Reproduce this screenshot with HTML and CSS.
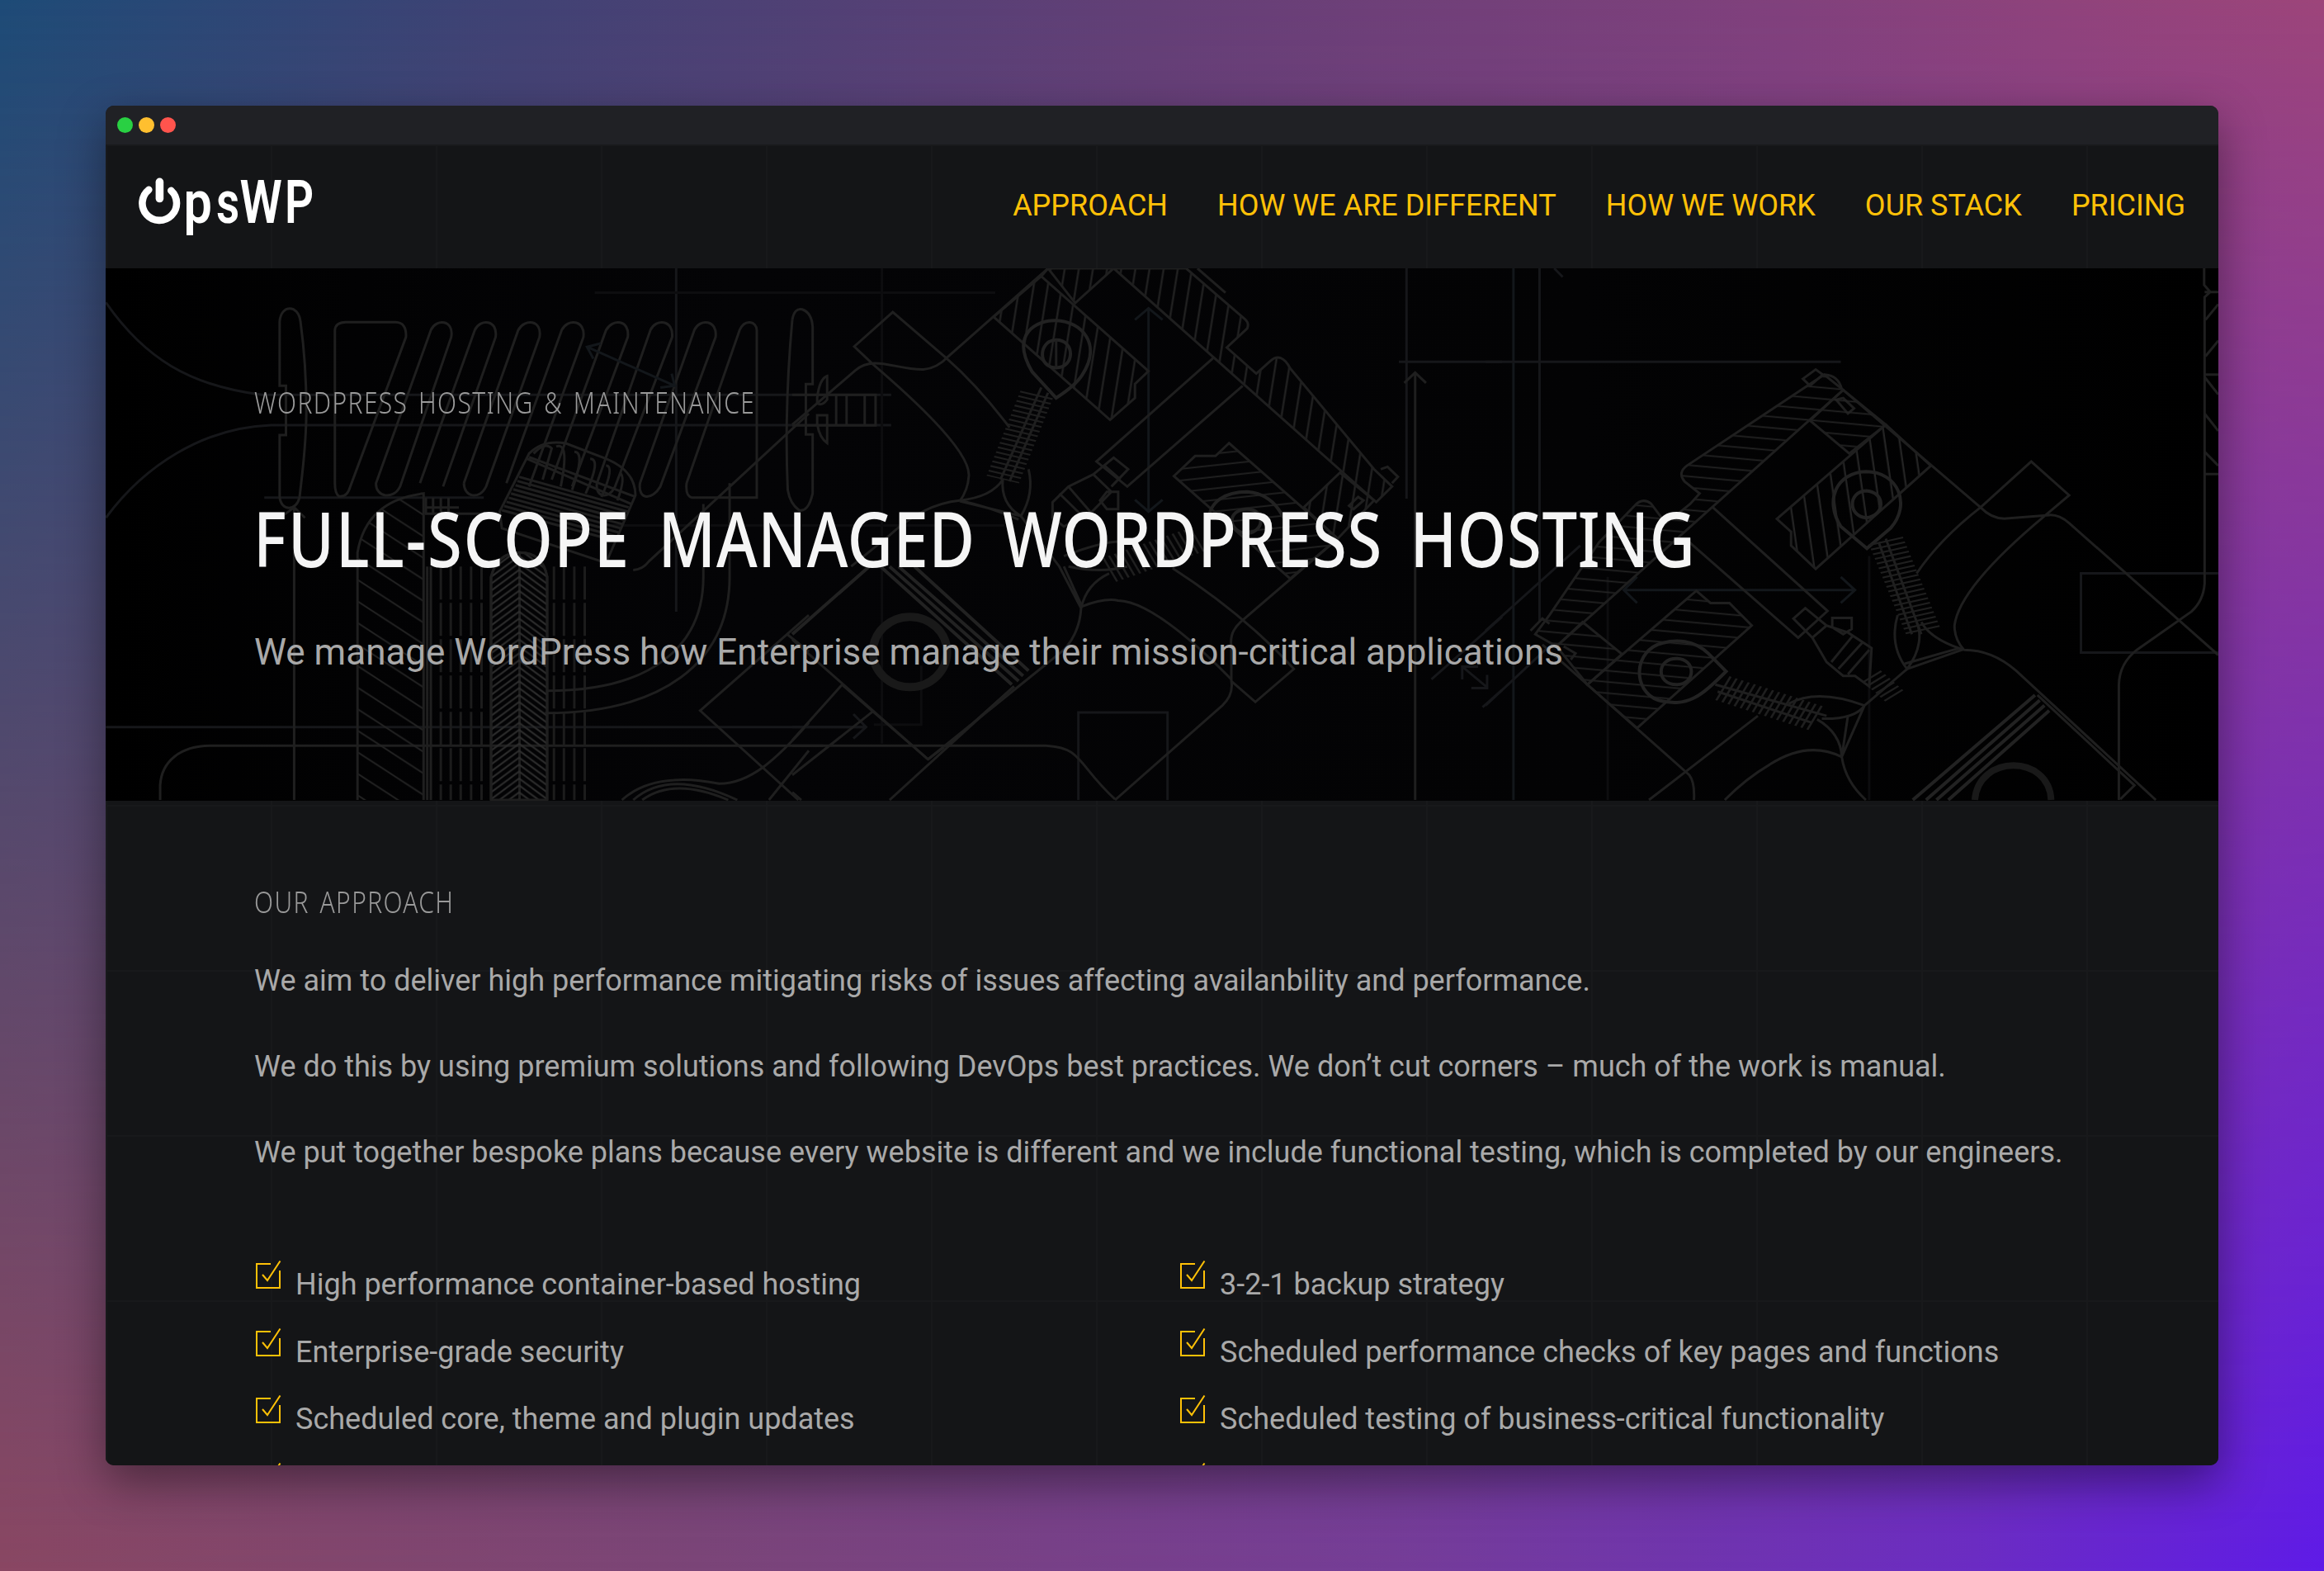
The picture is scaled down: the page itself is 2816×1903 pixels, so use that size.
FILE: index.html
```html
<!DOCTYPE html>
<html lang="en">
<head>
<meta charset="utf-8">
<title>OpsWP</title>
<link rel="stylesheet" href="styles.css">
</head>
<body>
<svg class="defs" width="0" height="0" aria-hidden="true">
  <symbol id="check" viewBox="0 0 32 36">
    <path d="M18 4H1v29h28V12M8 17l6 7L29.500 0.500" fill="none" stroke="#ffc107" stroke-width="2"/>
  </symbol>
</svg>
<div class="window">
  <div class="titlebar"><i class="dot green"></i><i class="dot yellow"></i><i class="dot red"></i></div>
  <div class="page">
    <header class="header">
      <svg class="logo" viewBox="0 0 230 100" role="img" aria-label="OpsWP">
        <g fill="none" stroke="#fff" stroke-linecap="round">
          <path d="M20.300 29.800A20.800 20.800 0 1 0 47.300 30.800" stroke-width="8.600"/>
          <path d="M33.400 20.300V40.500" stroke-width="9.600"/>
        </g>
        <g class="logo-text">
          <text transform="translate(62.500 70) scale(.84 1)">p</text>
          <text transform="translate(102 70) scale(.75 1)">s</text>
          <text transform="translate(130.500 70) scale(.8 1)">W</text>
          <text transform="translate(185 70) scale(.75 1)">P</text>
        </g>
      </svg>
      <nav class="nav"><a>APPROACH</a><a>HOW WE ARE DIFFERENT</a><a>HOW WE WORK</a><a>OUR STACK</a><a>PRICING</a></nav>
    </header>
    <section class="hero">
      <svg class="blueprint" viewBox="128 325 2560 645" aria-hidden="true">
        <defs>
          <pattern id="hLeft" width="146" height="62" patternUnits="userSpaceOnUse" x="571" y="660"><path d="M0-62L146 62M0 0L146 124M0-124L146 0" stroke="#232323" stroke-width="4"/></pattern>
          <pattern id="chev" width="124" height="20" patternUnits="userSpaceOnUse" x="866" y="860"><path d="M0 60L62 0L124 60M0 40L62-20L124 40M0 20L62-40L124 20M0 80L62 20L124 80M0 0L62-60L124 0" fill="none" stroke="#2c2c2c" stroke-width="4.500"/></pattern>
          <pattern id="hUp" width="31" height="40" patternUnits="userSpaceOnUse" patternTransform="rotate(7)"><path d="M10-2V42" stroke="#242424" stroke-width="4"/></pattern>
          <pattern id="hFlat" width="40" height="33" patternUnits="userSpaceOnUse" patternTransform="rotate(-8)"><path d="M-2 10H42" stroke="#232323" stroke-width="4"/></pattern>
          <pattern id="hFlat2" width="40" height="32" patternUnits="userSpaceOnUse" patternTransform="rotate(7)"><path d="M-2 10H42" stroke="#242424" stroke-width="4"/></pattern>
          <pattern id="hUp2" width="31" height="40" patternUnits="userSpaceOnUse" patternTransform="rotate(-6)"><path d="M10-2V42" stroke="#242424" stroke-width="4"/></pattern>
          <linearGradient id="glow"><stop offset="0" stop-color="#000"/><stop offset=".12" stop-color="#020203"/><stop offset=".3" stop-color="#040406"/><stop offset=".7" stop-color="#030304"/><stop offset="1" stop-color="#000"/></linearGradient>
        </defs>
        <rect x="128" y="325" width="2560" height="645" fill="url(#glow)"/>

        <!-- crankshaft, filter and belts -->
        <g class="ink" transform="translate(120 320) scale(.5485 .4209)">
          <path class="soft" d="M15 110C100 270 200 350 360 376H1750M15 730C100 580 230 470 380 463H1750M1275 12V1000M15 1332H1690M365 672H850"/>
          <path class="faint" d="M1095 82H1980M1120 752H2000"/>
          <path d="M135 1542V1500C138 1430 180 1387 245 1386H1600M431 700V1542M431 700L455 730M431 700L405 725"/>
          <path d="M399 350V165C402 115 440 115 445 165C455 260 458 330 458 420C458 520 450 590 443 670C437 712 402 712 399 670V492H413V350Z"/>
          <path d="M521 190Q522 168 545 167H655Q680 168 678 210L555 640Q548 672 530 668Q521 660 521 630Z"/>
          <path d="M612 630L733 190C745 155 785 160 778 210L665 640C650 680 610 670 612 630ZM709 630L830 190C842 155 882 160 876 210L760 640M806 630L926 190C940 155 980 160 973 210L855 640C840 680 806 670 806 630M900 630L1022 190C1035 155 1075 160 1070 210L950 640M1000 620L1120 190C1135 155 1173 160 1168 210L1045 640M1100 630L1218 190C1230 155 1270 160 1266 210L1140 640C1125 680 1095 670 1100 630M1195 630L1315 190C1327 155 1367 160 1362 210L1240 640C1222 680 1190 680 1195 630M1298 630L1415 190C1427 155 1453 165 1453 190V672H1310Q1295 668 1298 630"/>
          <path class="cold" d="M1078 238L1272 350M1108 228L1078 238L1092 272M1265 315L1272 350L1240 355"/>
          <path d="M571 1542V830Q590 680 717 660V1542" fill="url(#hLeft)"/>
          <path d="M725 870V1542M733 870V1542M866 1542V900Q880 830 929 830Q980 830 990 900V1542M929 830V1542" />
          <path d="M866 1542V900Q880 830 929 830Q980 830 990 900V1542Z" fill="url(#chev)"/>
          <path class="dash" d="M755 870V1542M777 870V1542M799 870V1542M822 870V1542M845 870V1542M1005 870V1542M1027 870V1542M1050 870V1542M1073 870V1542"/>
          <path d="M722 672V720M738 672V720M755 672V720M772 672V720M720 700H795M720 718H880"/>
          <path d="M885 712L950 545Q980 505 1030 515L1120 560Q1185 595 1185 665L1120 860L890 760ZM950 555L1182 668M945 560L1175 690"/>
          <path d="M960 545Q985 510 1000 530L980 620M1010 525Q1040 510 1020 640M1050 540Q1075 540 1045 650M1085 560Q1110 560 1075 660M1120 580Q1140 580 1110 670M1150 600Q1165 610 1145 680"/>
          <path d="M928 612L1170 700M924 624L1168 712M920 636L1164 724M915 648L1160 736M910 660L1156 748M905 672L1152 760M900 684L1148 772M895 696L1144 784M890 708L1140 796"/>
          <path d="M1335 690V900C1335 1100 1220 1228 990 1228M1393 630V900C1393 1150 1240 1292 985 1292M1180 880Q1200 880 1215 855L1568 430M1568 1010L1328 1285L1545 1542M1520 1065L1568 1115M1568 1320C1500 1420 1440 1495 1370 1495Q1310 1480 1270 1485Q1200 1490 1155 1542M1180 1542Q1260 1450 1410 1542M1200 1542Q1270 1475 1390 1542M1480 1542L1568 1400"/>
        </g>

        <!-- left cylinder bank -->
        <g class="ink" transform="translate(960 320) scale(.5485 .4209)">
          <path d="M0 160Q5 125 22 130Q43 140 45 180V345H30V490H45V660Q35 715 15 708Q-5 690-10 650Q-18 420 0 160M0 376H184V464H0M97 376V464M120 376V464M160 376V464M55 385Q60 330 77 322V390Q65 410 55 400ZM55 435H77V515Q60 500 55 460Z"/>
          <path class="soft" d="M0 1332H160M135 1295L163 1332L135 1365M632 1542V1290H829V1542M1357 12V675M1340 281H1568"/>
          <path class="faint" d="M198 12V1380M285 1155V1325H180"/>
          <path class="cold" d="M787 130V710M757 160L787 127L818 160M757 678L787 712L818 678"/>
          <path d="M1376 312V1542M1352 342L1376 312L1400 342"/>
          <path d="M0 462L140 305C180 260 230 305 290 303Q320 300 345 265L565 12M180 290L137 237L222 138L340 270Q410 350 480 470M180 290Q395 530 390 610Q388 650 370 682"/>
          <path d="M445 152L550 35L787 308L757 345V385L702 448Z" fill="url(#hUp)"/>
          <path d="M565 12L625 112L710 12Z" fill="url(#hUp)"/>
          <path d="M565 12L550 35M710 12L1290 685L1325 640L1285 590L1100 300Q1080 250 1055 280L1025 315L960 240L1005 185Q1010 170 1000 158L870 12Z" fill="url(#hUp)"/>
          <path d="M895 12L957 82"/>
          <path class="bold" d="M583 385L530 310C480 200 540 160 583 162C640 165 685 230 640 320Q625 350 583 385ZM583 218C545 218 540 298 583 298C625 298 625 218 583 218Z"/>
          <path d="M583 218V298"/>
          <path class="spring" d="M540 375L465 620"/><path d="M550 355L460 620M565 370L480 625"/>
          <path d="M370 680Q440 670 465 620M370 680Q440 700 500 735M370 682L505 725M465 620Q460 690 505 725Q535 660 522 590"/>
          <path d="M130 870L215 780Q290 690 370 680M505 725L590 870L638 990Q635 1060 600 1110L300 1425L0 1080M600 870L640 985Q690 960 720 968Q800 970 970 1195"/>
          <path d="M575 685L610 640L665 605L705 655L660 715L600 755L575 730ZM665 605L710 557L742 590L705 640M610 640L660 715M590 660L645 730M690 580L725 620M680 680L695 655H720V705H695Z"/>
          <path d="M930 270L672 568L740 640L995 350"/>
          <path d="M843 610L890 552H935L965 515L1205 790L1100 905Z" fill="url(#hFlat)"/>
          <path d="M1130 700L1210 600L1285 680L1205 790Z" fill="url(#hUp)"/>
          <path d="M1300 590L1315 583L1338 612L1325 630M1230 695L1250 670L1262 680L1240 705Z"/>
          <path class="bold" d="M920 740C920 680 960 655 1005 655Q1060 660 1085 730M1005 705C960 705 960 770 1005 775C1045 770 1045 705 1005 705"/>
          <path class="spring" d="M700 880L900 790"/>
          <path d="M600 840Q700 790 740 800M610 870Q680 890 740 870M638 990Q650 920 700 890M840 875Q1000 1010 1108 1165L1023 1260L970 1200M1205 790L990 1030Q965 1060 970 1100V1200Q975 1240 950 1270L713 1542M215 1542L490 1215"/>
          <path class="bold" d="M195 870L485 1210M215 870L500 1200M235 870L510 1185M270 870L522 1170M0 1065L170 870"/>
          <ellipse class="ring" cx="260" cy="1116" rx="82" ry="101"/>
          <path d="M0 1386H560C640 1390 630 1440 713 1540M0 1370L110 1210L300 1425M0 1470L180 1285M0 1520L20 1542M340 1390L490 1215M300 1425L335 1390"/>
          <path class="soft" d="M1412 1195L1568 1015M1525 1275L1568 1225M1480 1195V1158H1515M1480 1158L1535 1218M1500 1220H1535V1182"/>
        </g>

        <!-- right cylinder bank -->
        <g class="ink" transform="translate(1800 320) scale(.574 .4209)">
          <path class="cold" d="M59 12V1542M292 938H780M320 900L292 938L320 975M750 900L780 938L750 975"/>
          <path class="soft" d="M114 12V1030M0 281H750M1547 890H1257V1118H1547M145 12L163 37M0 1055L200 810M0 1270L130 1105"/>
          <path class="faint" d="M258 900V1542M810 840V1542"/>
          <path d="M755 362L1045 700Q1070 735 1100 732L1190 722Q1210 720 1232 745L1547 1125M1045 700L1152 568L1232 665L1180 725Q1000 930 990 1040Q990 1080 1010 1110M1045 700Q960 790 910 890"/>
          <path d="M715 318L425 580Q405 600 420 625L452 660L432 690L412 712L380 745L350 690Q332 670 315 695L240 800L135 1010L105 1065L150 1100L755 362Z" fill="url(#hFlat2)"/>
          <path d="M670 330L697 303L712 318L685 350ZM715 318Q745 320 752 360M740 390L755 385L778 415L765 430Z"/>
          <path d="M755 362L845 462L768 545L685 450Z" fill="url(#hFlat2)"/>
          <path d="M845 462L940 580L697 877L645 810V770L615 733Z" fill="url(#hUp2)"/>
          <path class="bold" d="M805 818L750 755C715 680 740 600 803 597C870 597 900 690 855 760ZM803 652C765 655 765 725 803 730C845 725 845 655 803 652"/>
          <path class="spring" d="M845 795L925 1060"/>
          <path d="M845 790L920 1065M830 800L900 1065M870 1010C855 1080 870 1130 890 1165C920 1110 920 1060 910 1030M1010 1110Q940 1080 920 1030M890 1165L1010 1108M885 1150L1000 1105M1010 1110Q1070 1110 1120 1170L1415 1542M1165 1240L1370 1500L1340 1540"/>
          <path d="M480 700L722 998L660 1075L430 800"/>
          <path d="M445 940L475 975H515L562 1040L320 1335L215 1210Z" fill="url(#hFlat2)"/>
          <path d="M205 1030L288 1122L215 1210L150 1100Z" fill="url(#hFlat2)"/>
          <path class="bold" d="M508 1172L470 1120C440 1080 400 1080 375 1090C310 1110 310 1230 365 1255C430 1280 460 1235 508 1172ZM403 1135C360 1135 360 1210 403 1210C445 1210 445 1135 403 1135"/>
          <path class="spring" d="M500 1220L705 1310"/>
          <path d="M485 1210L720 1300M490 1230L690 1320M640 1265Q700 1220 800 1270Q780 1310 710 1308M800 1270L752 1418L765 1300M752 1418Q750 1350 700 1310M752 1418Q680 1370 600 1440Q550 1480 505 1542M345 1542L575 1300M752 1418Q760 1490 803 1542M890 1165L800 1270M95 1055L120 1020L135 1035M165 1100L190 1120L180 1138"/>
          <path d="M120 1095L430 1470Q442 1490 440 1542"/>
          <path d="M650 1020L675 990L720 1040L690 1075ZM690 1075L720 1145L755 1185H780L810 1215L815 1105L765 1060L720 1040M730 1145L775 1070M745 1165L795 1090M765 1180L810 1110M732 1018H773V1050L755 1065L732 1045Z"/>
          <path class="spring small" d="M815 1185L865 1245"/>
          <path class="bold" d="M1160 1240L902 1542M1170 1255L930 1542M1180 1270L952 1542M1190 1285L977 1542"/>
          <path class="ring thin" d="M1033 1542C1040 1410 1190 1410 1194 1542"/>
          <path d="M1547 12M1517 12V60L1530 80L1518 95V920Q1515 970 1490 1000L1375 1110Q1338 1150 1337 1210V1542M1518 80H1547M1520 160L1547 115M1520 265L1547 220M1518 318H1547M1518 325L1547 375M1518 430L1547 480M1518 540L1547 580M1518 604H1547"/>
        </g>
      </svg>
      <div class="hero-copy">
        <p class="label"><span class="tech">WORDPRESS HOSTING &amp; MAINTENANCE</span></p>
        <h1 class="title"><span class="tech"><span class="wide">FULL-SCOPE</span> MANAGED WORDPRESS HOSTING</span></h1>
        <p class="lead">We manage WordPress how Enterprise manage their mission-critical applications</p>
      </div>
    </section>
    <section class="approach">
      <h2 class="label"><span class="tech">OUR APPROACH</span></h2>
      <div class="text">
        <p>We aim to deliver high performance mitigating risks of issues affecting availanbility and performance.</p>
        <p>We do this by using premium solutions and following DevOps best practices. We don’t cut corners – much of the work is manual.</p>
        <p>We put together bespoke plans because every website is different and we include functional testing, which is completed by our engineers.</p>
      </div>
      <ul class="list">
        <li><svg class="icon"><use href="#check"/></svg>High performance container-based hosting</li>
        <li><svg class="icon"><use href="#check"/></svg>3-2-1 backup strategy</li>
        <li><svg class="icon"><use href="#check"/></svg>Enterprise-grade security</li>
        <li><svg class="icon"><use href="#check"/></svg>Scheduled performance checks of key pages and functions</li>
        <li><svg class="icon"><use href="#check"/></svg>Scheduled core, theme and plugin updates</li>
        <li><svg class="icon"><use href="#check"/></svg>Scheduled testing of business-critical functionality</li>
        <li><svg class="icon"><use href="#check"/></svg></li>
        <li><svg class="icon"><use href="#check"/></svg></li>
      </ul>
    </section>
  </div>
</div>
</body>
</html>
```
FILE: styles.css
```css
* { box-sizing: border-box; margin: 0; padding: 0; }

body {
  height: 1903px;
  padding: 128px;
  overflow: hidden;
  position: relative;
  isolation: isolate;
  font-family: Roboto, sans-serif;
  font-size: 36px;
  line-height: 54px;
  color: #a9a9a9;
  background: linear-gradient(90deg, #8a4763, #7b4578 30%, #753d98 60%, #6b2cc4 85%, #5f1be8);
}

body::before {
  content: "";
  position: absolute;
  inset: 0;
  z-index: -1;
  background: linear-gradient(90deg, #1d4b77, #404274 22%, #643f76 50%, #81417c 77%, #9d457a);
  -webkit-mask-image: linear-gradient(#000, transparent);
  mask-image: linear-gradient(#000, transparent);
}

.defs { position: absolute; }

.window {
  height: 1647px;
  display: flex;
  flex-direction: column;
  border-radius: 10px;
  overflow: hidden;
  background: #141517;
  box-shadow: 0 20px 56px rgba(0, 0, 0, .42);
}

.titlebar {
  flex: none;
  height: 47px;
  display: flex;
  align-items: center;
  gap: 7px;
  padding-left: 14px;
  background: #202125;
}

.dot { width: 19px; height: 19px; border-radius: 50%; }
.green { background: #29d043; }
.yellow { background: #ffbf2f; }
.red { background: #ff544d; }

.page {
  flex: 1;
  min-height: 0;
  overflow: hidden;
  background-color: #141517;
  background-image:
    linear-gradient(#18191b 2px, transparent 2px),
    linear-gradient(90deg, #18191b 2px, transparent 2px);
  background-size: 200px 200px;
}

.header {
  height: 150px;
  display: flex;
  justify-content: space-between;
  align-items: center;
  padding: 0 40px 0 32px;
}

.logo { width: 230px; height: 100px; }
.logo-text { font: 600 73px Roboto, sans-serif; fill: #fff; }

.nav { display: flex; gap: 60px; padding-bottom: 2px; color: #ffc107; }

.hero {
  height: 645px;
  padding: 132px 180px 0;
  position: relative;
  background: #020203;
}

.blueprint { position: absolute; inset: 0; width: 100%; height: 100%; }
.hero-copy { position: relative; }

.ink path, .ink ellipse { stroke: #1f1f1f; stroke-width: 3px; vector-effect: non-scaling-stroke; }
.ink path:not([fill]), .ink ellipse { fill: none; }
.ink .soft { stroke: #16171a; }
.ink .faint { stroke: #0d0d0f; }
.ink .cold { stroke: #13171b; }
.ink .bold { stroke: #222; stroke-width: 4px; }
.ink .ring { stroke: #191919; stroke-width: 10px; }
.ink .thin { stroke-width: 8px; }
.ink .dash { stroke-dasharray: 40px 4px; stroke: #1c1c1c; }
.ink .spring { stroke: #1f1f1f; stroke-width: 75px; stroke-dasharray: 5px 9px; vector-effect: none; }
.ink .small { stroke-width: 50px; }

.tech {
  display: inline-block;
  white-space: nowrap;
  font-family: "Noto Sans", sans-serif;
  transform-origin: 0 50%;
}

.label { height: 60px; line-height: 60px; font-size: 37px; font-weight: 300; color: #999; }
.label .tech { transform: scaleX(.81); letter-spacing: 1.7px; word-spacing: 4.4px; }

.title { height: 120px; margin-top: 75px; line-height: 120px; font-size: 92px; font-weight: 500; color: #f5f5f5; }
.title .tech { margin-left: -1px; transform: scaleX(.825); letter-spacing: .8px; word-spacing: 16px; }
.title .wide { letter-spacing: 2.3px; }

.lead { margin-top: 44px; font-size: 44px; line-height: 68px; }

.approach { padding: 92px 0 0 180px; }
.text { display: grid; gap: 50px; margin-top: 39px; white-space: nowrap; }

.list {
  display: grid;
  grid-template-columns: 1120px 1fr;
  row-gap: 27.7px;
  margin: 106px 0 0 2px;
  list-style: none;
}

.list li { display: flex; height: 54px; gap: 16px; }
.icon { flex: none; width: 32px; height: 36px; margin-top: -2px; }
```
